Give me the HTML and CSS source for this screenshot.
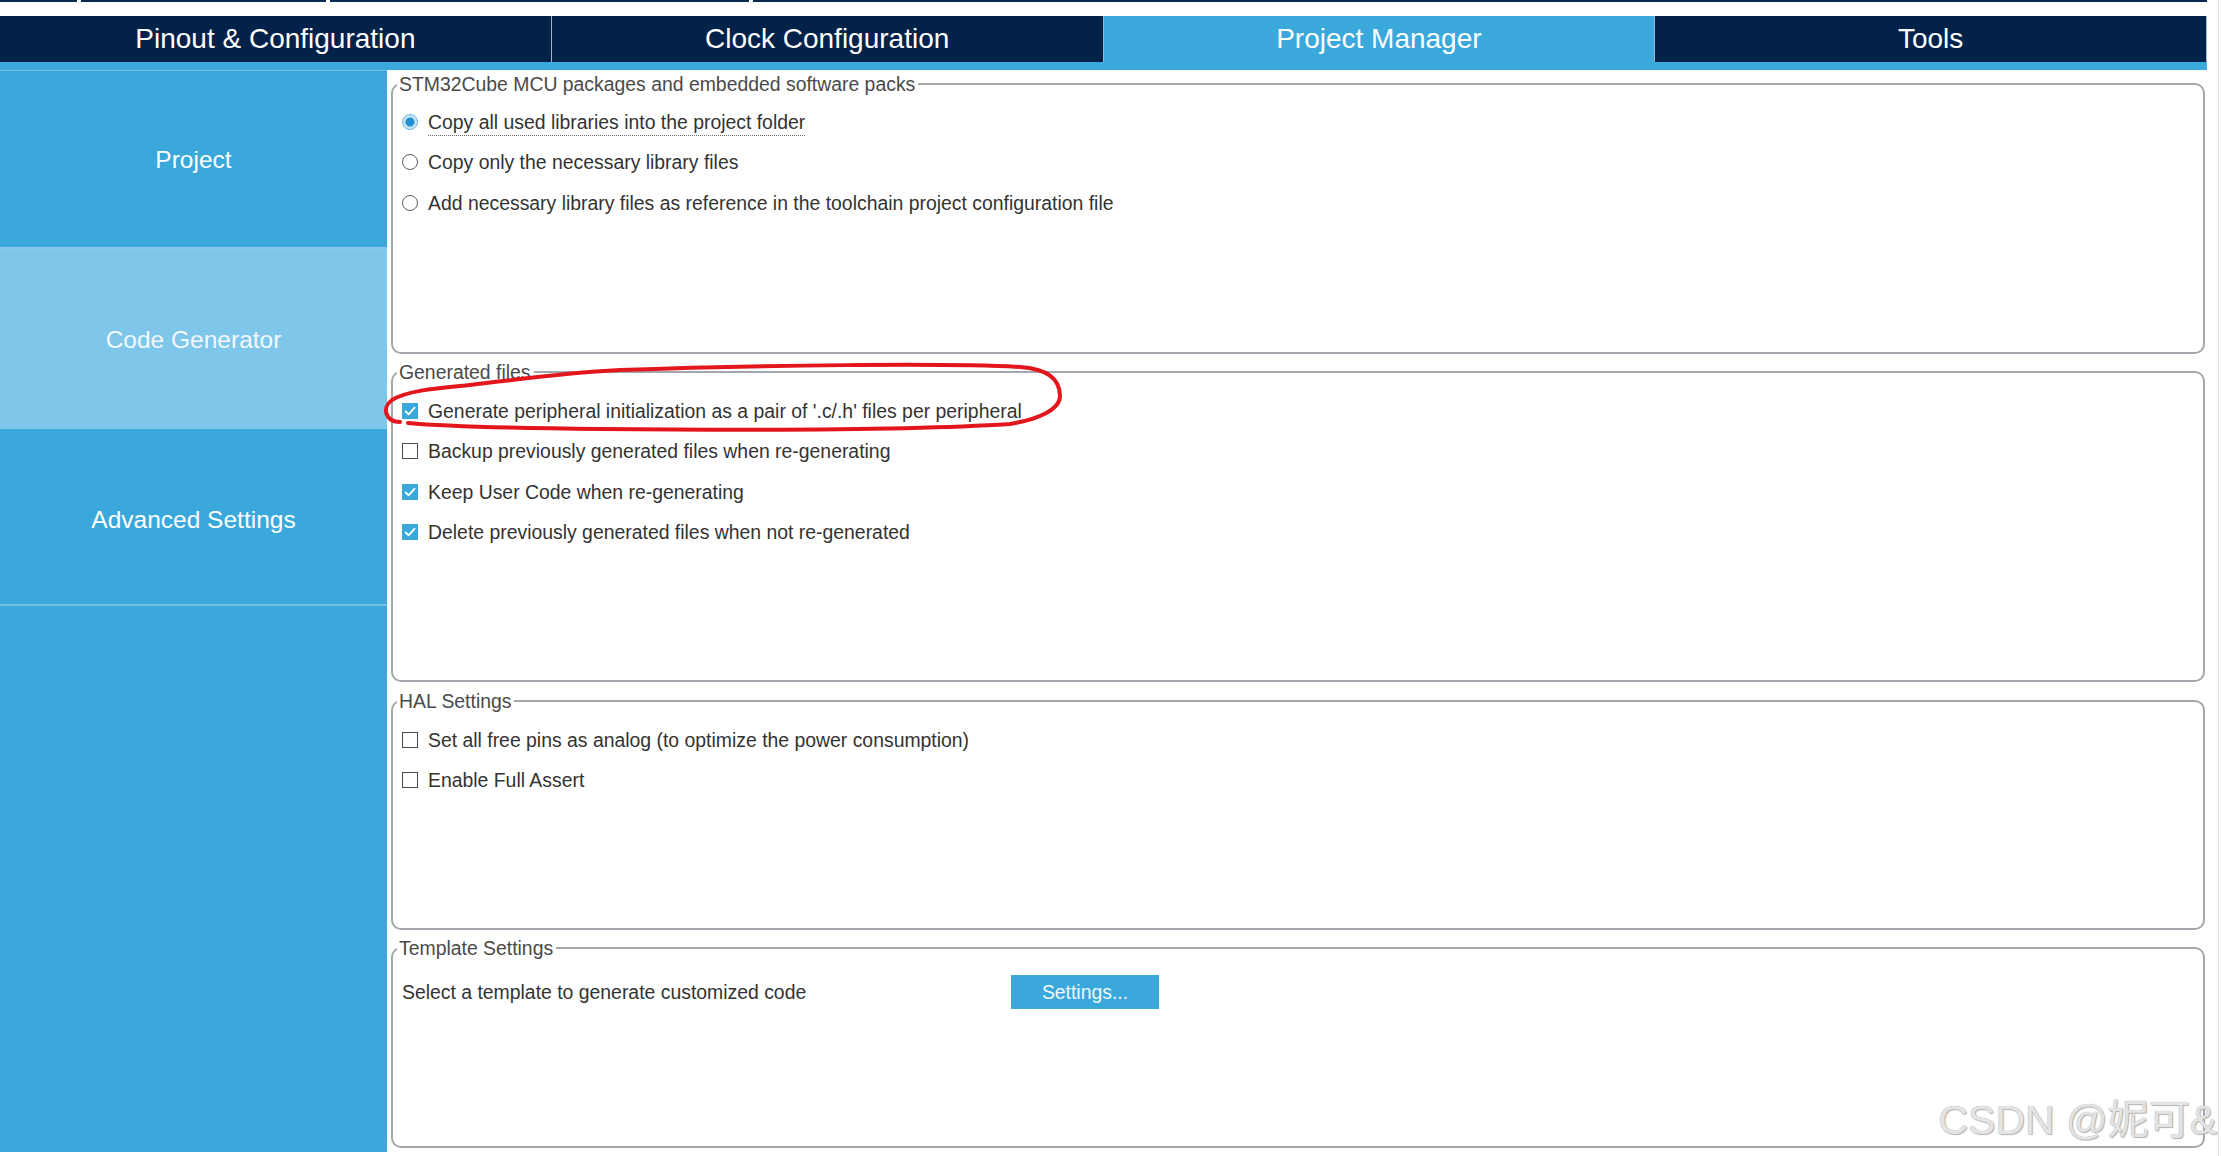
FILE: index.html
```html
<!DOCTYPE html>
<html lang="en">
<head>
<meta charset="utf-8">
<title>Project Manager - Code Generator</title>
<link rel="stylesheet" href="styles.css">
</head>
<body>
<div class="page">
  <div class="app">
    <div class="topstrip">
      <span class="seg seg1"></span>
      <span class="seg seg2"></span>
      <span class="seg seg3"></span>
      <span class="seg seg4"></span>
    </div>
    <nav class="tabs">
      <div class="tab">Pinout &amp; Configuration</div>
      <div class="tab">Clock Configuration</div>
      <div class="tab active">Project Manager</div>
      <div class="tab">Tools</div>
    </nav>
    <div class="stripe"></div>
    <div class="workspace">
      <aside class="sidebar">
        <div class="side-item first">Project</div>
        <div class="side-item selected">Code Generator</div>
        <div class="side-item last">Advanced Settings</div>
      </aside>
      <main class="content">
        <fieldset class="group g1">
          <legend>STM32Cube MCU packages and embedded software packs</legend>
          <div class="rows">
            <div class="opt"><span class="radio on"></span><span class="lbl focus">Copy all used libraries into the project folder</span></div>
            <div class="opt"><span class="radio"></span><span class="lbl">Copy only the necessary library files</span></div>
            <div class="opt"><span class="radio"></span><span class="lbl">Add necessary library files as reference in the toolchain project configuration file</span></div>
          </div>
        </fieldset>
        <fieldset class="group g2">
          <legend>Generated files</legend>
          <div class="rows">
            <div class="opt"><span class="check on"><svg viewBox="0 0 16 16"><path d="M3.6 8.4 L6.6 11.4 L12.6 4.6"/></svg></span><span class="lbl">Generate peripheral initialization as a pair of '.c/.h' files per peripheral</span></div>
            <div class="opt"><span class="check"></span><span class="lbl">Backup previously generated files when re-generating</span></div>
            <div class="opt"><span class="check on"><svg viewBox="0 0 16 16"><path d="M3.6 8.4 L6.6 11.4 L12.6 4.6"/></svg></span><span class="lbl">Keep User Code when re-generating</span></div>
            <div class="opt"><span class="check on"><svg viewBox="0 0 16 16"><path d="M3.6 8.4 L6.6 11.4 L12.6 4.6"/></svg></span><span class="lbl">Delete previously generated files when not re-generated</span></div>
          </div>
        </fieldset>
        <fieldset class="group g3">
          <legend>HAL Settings</legend>
          <div class="rows">
            <div class="opt"><span class="check"></span><span class="lbl">Set all free pins as analog (to optimize the power consumption)</span></div>
            <div class="opt"><span class="check"></span><span class="lbl">Enable Full Assert</span></div>
          </div>
        </fieldset>
        <fieldset class="group g4">
          <legend>Template Settings</legend>
          <div class="template-row">
            <span class="template-text">Select a template to generate customized code</span>
            <button class="btn">Settings...</button>
          </div>
        </fieldset>
      </main>
    </div>
  </div>
  <div class="gutter"></div>
  <svg class="annotation" viewBox="0 0 2221 1156" width="2221" height="1156">
    <path d="M400,422 C386,422 381,408 392,400 C408,390 440,388 470,385 C530,378 560,373 620,370 C760,365 950,363 1020,367 C1050,369 1060,381 1060,396 C1060,409 1040,419 1010,424 C900,431 700,430 600,429 C500,428 440,426 408,423"/>
  </svg>
  <div class="watermark">CSDN @妮可&amp;</div>
</div>
</body>
</html>
```

FILE: styles.css
```css
html, body {
  margin: 0;
  padding: 0;
  background: #ffffff;
}

body {
  font-family: "Liberation Sans", Arial, "Noto Sans CJK SC", sans-serif;
  color: #333333;
}

.page {
  position: relative;
  width: 2221px;
  height: 1156px;
  display: flex;
  overflow: hidden;
}

.app {
  width: 2207px;
  display: flex;
  flex-direction: column;
}

.gutter {
  width: 11px;
  margin-right: 2px;
  border-right: 1px solid #e2e4e6;
}

/* top strip (previous tab row peeking) */
.topstrip {
  height: 2px;
  display: flex;
  gap: 4px;
  margin-bottom: 14px;
}
.seg { background: #0a2a52; height: 2px; }
.seg1 { width: 77px; }
.seg2 { width: 245px; }
.seg3 { width: 419px; }
.seg4 { flex: 1; }

/* main tabs */
.tabs {
  height: 46px;
  display: grid;
  grid-template-columns: repeat(4, 1fr);
  gap: 1px;
  padding-right: 1px;
  background: #a7b3c2;
}
.tab {
  background: #03224a;
  color: #ffffff;
  font-size: 28px;
  font-weight: normal;
  display: flex;
  align-items: center;
  justify-content: center;
}
.tab.active {
  background: #3ba8db;
}

.stripe {
  height: 8px;
  background: #3ba8db;
}

/* workspace */
.workspace {
  display: flex;
  height: 1082px;
}

.sidebar {
  width: 387px;
  background: #3aa8db;
  display: flex;
  flex-direction: column;
}
.side-item {
  box-sizing: border-box;
  display: flex;
  align-items: center;
  justify-content: center;
  color: #ffffff;
  font-size: 24.5px;
}
.side-item.first {
  height: 179px;
  padding-top: 2px;
  border-top: 1px solid #72bfe6;
  border-bottom: 2px solid #86cbee;
}
.side-item.selected {
  height: 180px;
  padding-top: 2px;
  background: #7ec6ea;
  color: #f2f9fd;
}
.side-item.last {
  height: 177px;
  padding-top: 6px;
  border-bottom: 2px solid #72bfe6;
}

.content {
  flex: 1;
  padding: 0 2px 0 4px;
  display: flex;
  flex-direction: column;
  gap: 4px;
}

/* group boxes */
.group {
  box-sizing: border-box;
  margin: 0;
  padding: 0 9px;
  min-width: 0;
  border: 2px solid #a3a8ae;
  border-radius: 10px;
}
.group legend {
  font-size: 19.4px;
  line-height: 28px;
  padding: 0 3px 0 2px;
  margin-left: -5px;
  color: #4a4a4a;
}
.g1 { height: 284px; }
.g2 { height: 324px; }
.g3 { height: 243px; margin-top: 1px; }
.g4 { height: 214px; }

.rows {
  display: flex;
  flex-direction: column;
}
.g1 .rows { padding-top: 3.5px; }
.g2 .rows { padding-top: 4.5px; }
.g3 .rows { padding-top: 4.5px; }
.g3 .opt { height: 40px; }

.opt {
  height: 40.5px;
  display: flex;
  align-items: center;
  gap: 10px;
  font-size: 19.4px;
  color: #333333;
}
.lbl {
  line-height: 24px;
  white-space: nowrap;
}
.lbl.focus {
  padding-bottom: 1px;
  border-bottom: 1px dotted #6a6a6a;
  margin-top: 3px;
}

.radio {
  box-sizing: border-box;
  width: 16px;
  height: 16px;
  border-radius: 50%;
  border: 1.5px solid #5d5d5d;
  background: #ffffff;
  flex: none;
}
.radio.on {
  border: 1.5px solid #6fb6de;
  background: radial-gradient(circle at center, #1f8fd0 0, #1f8fd0 4px, #c6e4f5 5px);
}

.check {
  box-sizing: border-box;
  width: 16px;
  height: 16px;
  border: 1.5px solid #4c4c4c;
  background: #ffffff;
  flex: none;
  display: flex;
}
.check.on {
  border: none;
  background: #3aa8db;
}
.check svg {
  width: 16px;
  height: 16px;
}
.check svg path {
  fill: none;
  stroke: #ffffff;
  stroke-width: 1.8;
  stroke-linecap: round;
  stroke-linejoin: round;
}

.template-row {
  margin-top: 13px;
  height: 34px;
  display: flex;
  align-items: center;
  font-size: 19.4px;
  color: #333333;
}
.template-text {
  width: 609px;
  white-space: nowrap;
}
.btn {
  width: 148px;
  height: 34px;
  border: none;
  margin: 0;
  padding: 0;
  background: #3aa8db;
  color: #eef8fd;
  font-family: "Liberation Sans", Arial, sans-serif;
  font-size: 19.4px;
}

/* overlays */
.annotation {
  position: absolute;
  left: 0;
  top: 0;
  pointer-events: none;
}
.annotation path {
  fill: none;
  stroke: #e2161c;
  stroke-width: 4;
  stroke-linecap: round;
  stroke-linejoin: round;
}

.watermark {
  position: absolute;
  right: 4px;
  bottom: 10px;
  font-family: "Liberation Sans", Arial, "Noto Sans CJK SC", sans-serif;
  font-size: 41px;
  color: #e4e4e4;
  text-shadow: 0 0 1px #9a9a9a, 1px 1px 1px #b5b5b5;
  white-space: nowrap;
}
```
